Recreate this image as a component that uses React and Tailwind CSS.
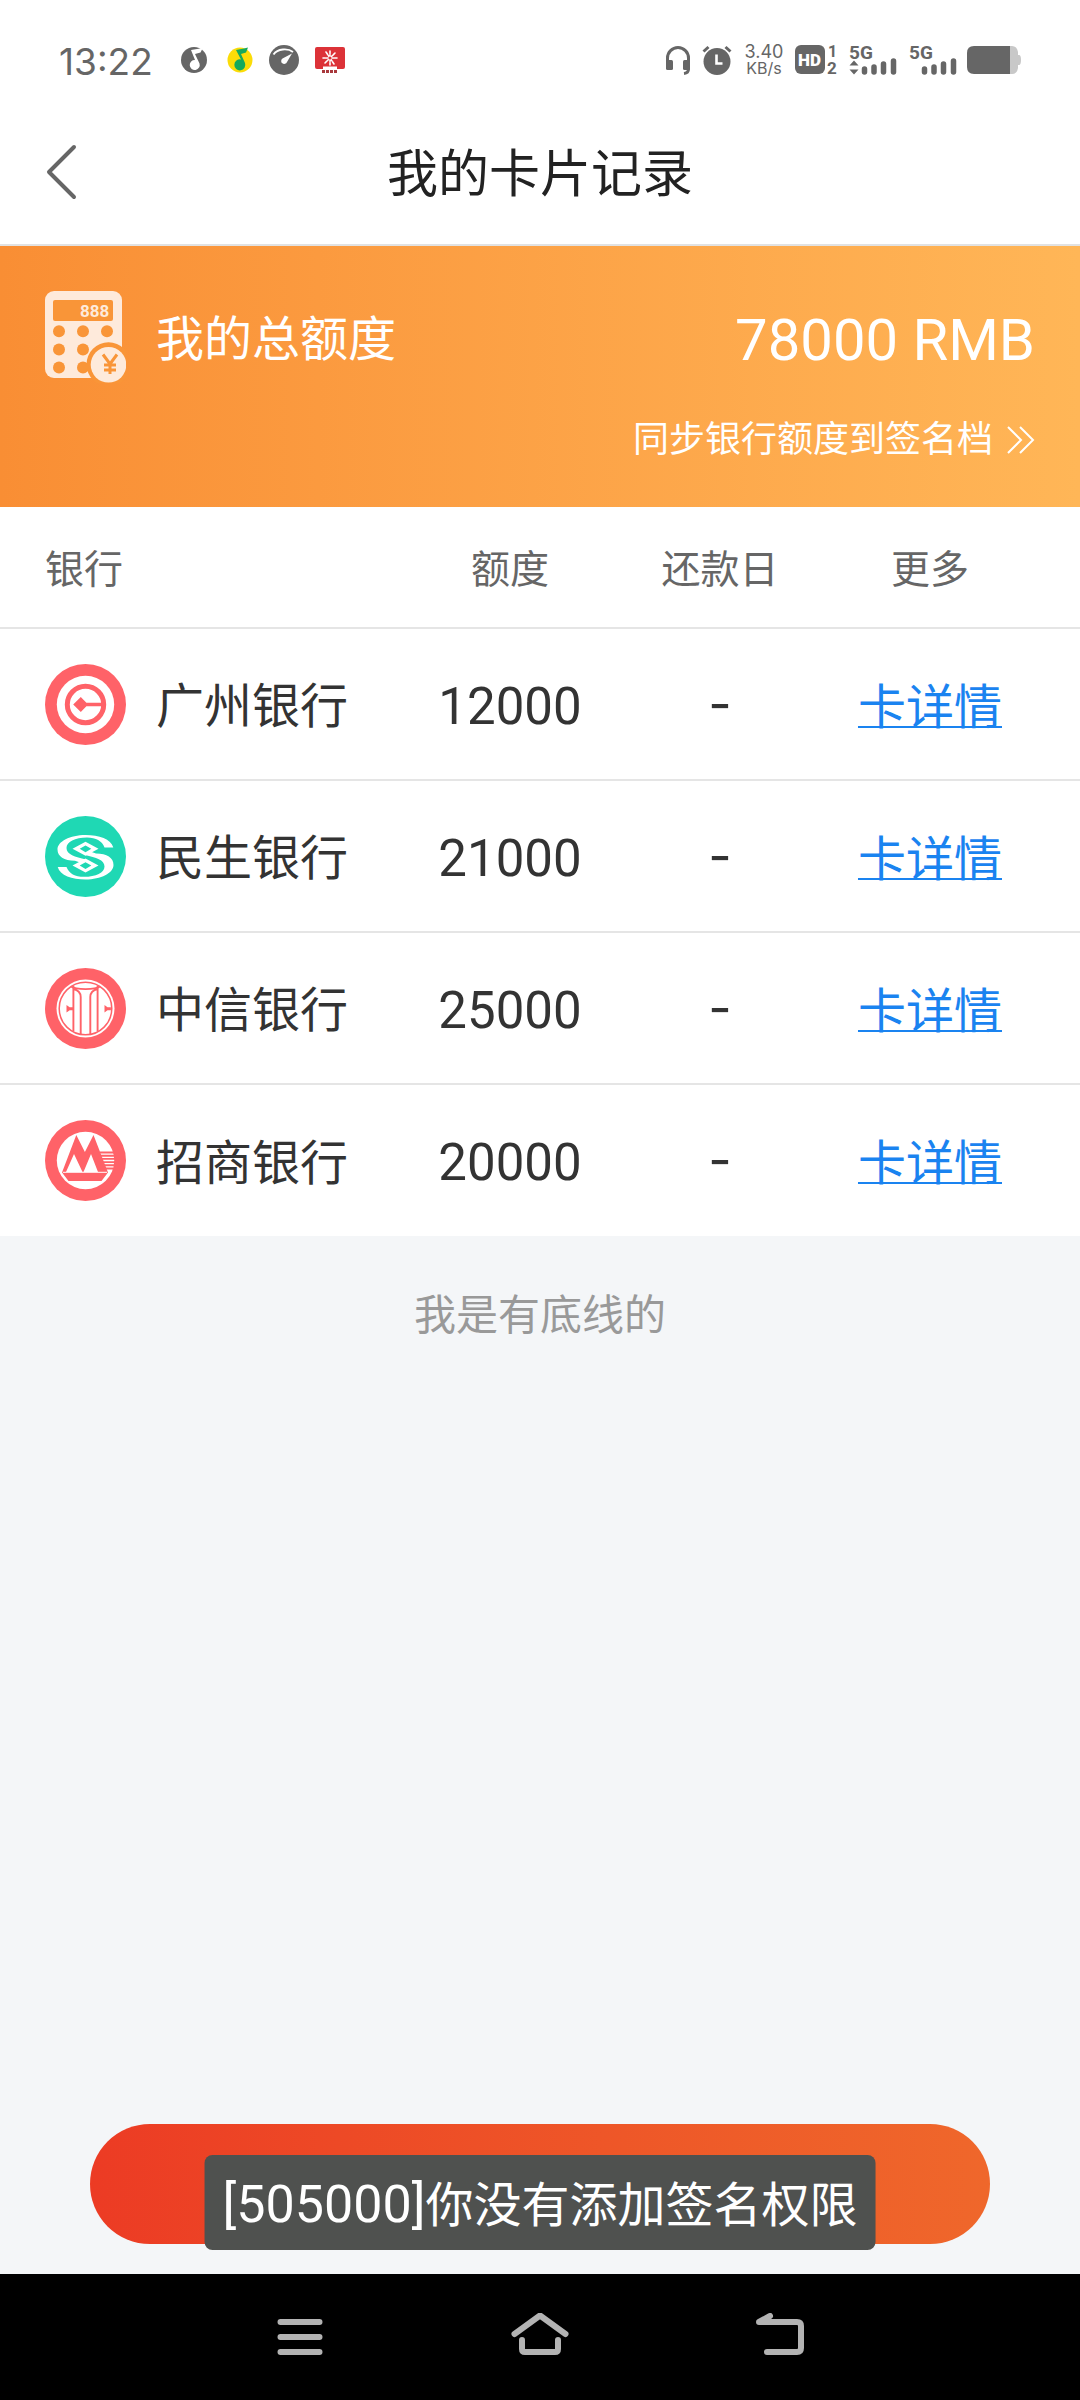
const cards = [
  { id: 1, bank: "广州银行", limit: 12000, repayDay: "-", Logo: GuangzhouLogo },
  { id: 2, bank: "民生银行", limit: 21000, repayDay: "-", Logo: MinshengLogo },
  { id: 3, bank: "中信银行", limit: 25000, repayDay: "-", Logo: CiticLogo },
  { id: 4, bank: "招商银行", limit: 20000, repayDay: "-", Logo: MerchantsLogo },
];

function GuangzhouLogo() {
  return (
    <svg viewBox="0 0 81 81" className="size-[81px] shrink-0" aria-hidden="true">
      <circle cx="40.5" cy="40.5" r="40.5" fill="#ff6268" />
      <circle cx="40.5" cy="40.5" r="28.7" fill="#fff" />
      <circle cx="40.5" cy="40.5" r="18.2" fill="#fff" stroke="#ff6268" strokeWidth="5" />
      <path d="M28.2 40.5l7.6-7.6 5.6 5.8H57v3.6H41.4l-5.6 5.8z" fill="#ff6268" />
    </svg>
  );
}

function MinshengLogo() {
  const half =
    "M68.3 31.5C66 23 54 19 40.5 19C25 19 12.5 25.5 12.5 33.5C12.5 40.5 19 44.6 30 44.8L35 46.6L41 43.4C30 41 21.5 38.5 21.5 32C21.5 26 30 21.6 42 21.6C51 21.6 57 25 59.5 31.5Z";
  return (
    <svg viewBox="0 0 81 81" className="size-[81px] shrink-0" aria-hidden="true">
      <circle cx="40.5" cy="40.5" r="40.5" fill="#1fd8b4" />
      <path d={half} fill="#fff" />
      <path d={half} fill="#fff" transform="rotate(180 40.5 41.2)" />
      <path
        fillRule="evenodd"
        fill="#fff"
        d="M40.5 25.8l13 7-13 7-13-7zM40.5 29.4l-5.8 3.4 5.8 3.4 5.8-3.4zM40.5 42.6l13 7-13 7-13-7zM40.5 46.2l-5.8 3.4 5.8 3.4 5.8-3.4z"
      />
    </svg>
  );
}

function CiticLogo() {
  return (
    <svg viewBox="0 0 81 81" className="size-[81px] shrink-0" aria-hidden="true">
      <circle cx="40.5" cy="40.5" r="40.5" fill="#ff6268" />
      <circle cx="40.5" cy="40.5" r="29" fill="#fff" />
      <circle cx="40.5" cy="40.5" r="26.3" fill="none" stroke="#ff6268" strokeWidth="1.5" />
      <g fill="none" stroke="#ff6268" strokeWidth="1.9">
        <path d="M28.4 18v45M28.4 21c4 1 7.3 3.2 7.3 8v37M52.6 18v45M52.6 21c-4 1-7.3 3.2-7.3 8v37" />
        <path d="M26 18.5c5 3.5 24 3.5 29 0" />
      </g>
      <path d="M21.5 37l3.2 2.200h3.4v3h-3.4l-3.2 2.3zM59.5 37l3 2.200h3.4v3h-3.4l-3 2.3z" fill="#ff6268" />
    </svg>
  );
}

function MerchantsLogo() {
  return (
    <svg viewBox="0 0 81 81" className="size-[81px] shrink-0" aria-hidden="true">
      <circle cx="40.5" cy="40.5" r="40.5" fill="#ff6268" />
      <circle cx="40.5" cy="40.5" r="28.7" fill="#fff" />
      <path d="M31.3 15l8.6 17 8.6-17 14.5 37.5-6.5 8.5H23.5l-6.5-8.5z" fill="#ff6268" />
      <path d="M29 34l8.5 18H21zM46 34l7 18H38.5z" fill="#fff" />
      <path d="M18 52.3h44" stroke="#fff" strokeWidth="1" />
      <path
        d="M55 32.5h14M56 35.7h14M57 38.9h13M58 42.1h12M59 45.3h10M60 48.5h8"
        stroke="#ff6268"
        strokeWidth="1.9"
      />
    </svg>
  );
}

function CalculatorIcon() {
  return (
    <svg viewBox="0 0 81 92" className="h-[92px] w-[81px] shrink-0" aria-hidden="true">
      <rect width="77" height="87" rx="9" fill="#feeadb" />
      <rect x="8" y="9" width="60" height="21" rx="2" fill="#f99538" />
      <text x="35" y="26" fontSize="17" fontWeight="700" fontFamily="Roboto, sans-serif" fill="#feeadb">
        888
      </text>
      <g fill="#f99538">
        <circle cx="14" cy="40.3" r="6" />
        <circle cx="38" cy="40.3" r="6" />
        <circle cx="62" cy="40.3" r="6" />
        <circle cx="14" cy="58.6" r="6" />
        <circle cx="38" cy="58.6" r="6" />
        <circle cx="14" cy="76.4" r="6" />
        <circle cx="38" cy="76.4" r="6" />
        <circle cx="63.5" cy="73.3" r="22" />
      </g>
      <circle cx="63.5" cy="73.8" r="17.8" fill="#feeadb" />
      <path d="M58 63.5l7 9.5 7-9.5M65 73v10M59 74h12M59 79h12" fill="none" stroke="#f99538" strokeWidth="3" />
    </svg>
  );
}

function SignalIcon(props) {
  return (
    <svg viewBox="0 0 48 32" className="h-8 w-12 overflow-visible" aria-hidden="true">
      <text x="0" y="15" fontSize="19" fontWeight="700" fontFamily="Roboto, sans-serif" fill="#666">
        5G
      </text>
      {props.transfer && <path d="M5 16.5l4.5 5h-9zM5 30.5l4.5-5h-9z" fill="#666" />}
      <path
        d="M15.5 25v3M25 23v5M34.5 20v8M44.5 17v11"
        stroke="#666"
        strokeWidth="5.5"
        strokeLinecap="round"
      />
    </svg>
  );
}

function StatusBar() {
  return (
    <div className="flex h-[100px] items-center justify-between bg-white px-[59px] pt-5 text-[#666]">
      <div className="flex items-center">
        <span className="pt-[3px] font-[Inter,sans-serif] text-[37px] leading-10">13:22</span>
        <svg viewBox="0 0 26 26" className="ml-[28px] size-[26px]" aria-hidden="true">
          <circle cx="13" cy="13" r="13" fill="#666" />
          <path d="M10 3l9-1.5 3-1-2.5 5-5.5 1.5 4.5 9.5a5 5 0 1 1-4.5-3.5z" fill="#fff" />
        </svg>
        <svg viewBox="0 0 26 26" className="ml-5 size-[26px]" aria-hidden="true">
          <circle cx="13" cy="13" r="12.5" fill="#fbdc08" />
          <path d="M9 3l8-1.5 4-1-2 5-5 1.5 4 9a5.5 5.5 0 1 1-4-3.5z" fill="#14a95c" />
        </svg>
        <svg viewBox="0 0 30 30" className="ml-4 size-[30px]" aria-hidden="true">
          <circle cx="15" cy="15" r="15" fill="#666" />
          <path d="M4.5 9.5C8.5 3.5 19 3 24 7" fill="none" stroke="#fff" strokeWidth="1.8" />
          <path d="M23 8.5l-5 8.5a3 3 0 1 1-4.5-3.5z" fill="#fff" />
        </svg>
        <svg viewBox="0 0 30 27" className="ml-4 h-[27px] w-[30px]" aria-hidden="true">
          <rect width="30" height="22" rx="2" fill="#dc3238" />
          {/* flower: eight thin petals round the middle */}
          <path
            d="M15 11V4M15 11l5-5M15 11h7M15 11l4 6M15 11v7M15 11l-5 5M15 11H8M15 11l-4-6"
            stroke="#fff"
            strokeWidth="1.6"
            strokeDasharray="3.5 1"
            strokeLinecap="round"
          />
          <circle cx="15" cy="11" r="1.6" fill="#dc3238" />
          <path d="M8 19.5h14v2.5H8z" fill="#fff" />
          <path d="M7 24.5h15" stroke="#a8383c" strokeWidth="3" strokeDasharray="3 1" />
        </svg>
      </div>

      <div className="flex items-center">
        <svg viewBox="0 0 26 30" className="h-[30px] w-[26px]" aria-hidden="true">
          <path d="M2.5 18v-5a10.5 10.5 0 0 1 21 0v11q0 4-4.5 4.5" fill="none" stroke="#666" strokeWidth="3" />
          <rect x="1" y="15" width="7" height="10" rx="1.5" fill="#666" />
          <rect x="18" y="15" width="7" height="10" rx="1.5" fill="#666" />
        </svg>
        <svg viewBox="0 0 30 30" className="ml-[11px] size-[30px]" aria-hidden="true">
          <circle cx="15" cy="16.5" r="13.5" fill="#666" />
          <path d="M1.5 6.5l5-4.5M28.5 6.5l-5-4.5" stroke="#666" strokeWidth="3" />
          <path d="M14.5 9.5v9h6" fill="none" stroke="#fff" strokeWidth="2.6" />
        </svg>
        <div className="ml-3 w-10 text-center font-[Inter,sans-serif] text-[18px] leading-4">
          <p>3.40</p>
          <p className="text-[16px]">KB/s</p>
        </div>
        <svg viewBox="0 0 44 32" className="ml-[11px] h-8 w-11 overflow-visible" aria-hidden="true">
          <rect y="1" width="30" height="29" rx="6" fill="#666" />
          <text x="3" y="22" fontSize="17" fontWeight="900" fontFamily="Roboto, sans-serif" fill="#fff">
            HD
          </text>
          <text x="33" y="13" fontSize="16" fontWeight="700" fontFamily="Roboto, sans-serif" fill="#666">
            1
          </text>
          <text x="32" y="30" fontSize="17" fontWeight="700" fontFamily="Roboto, sans-serif" fill="#666">
            2
          </text>
        </svg>
        <div className="ml-[10px] flex gap-3">
          <SignalIcon transfer />
          <SignalIcon />
        </div>
        <svg viewBox="0 0 54 28" className="ml-[10px] h-7 w-[54px]" aria-hidden="true">
          <path d="M42 0h3q5 0 6 6v3h1q2 0 2 5t-2 5h-1v3q-1 6-6 6h-3z" fill="#c8c8c8" />
          <path d="M7 0h36v28H7q-7 0-7-7V7q0-7 7-7z" fill="#666" />
        </svg>
      </div>
    </div>
  );
}

function SystemNav() {
  return (
    <nav className="bg-black">
      <div className="mx-auto grid h-[126px] w-2/3 grid-cols-3 place-items-center">
        <button type="button" aria-label="菜单">
          <svg viewBox="0 0 60 48" className="h-12 w-[60px]" fill="none" stroke="#b3b3b3" strokeWidth="6" strokeLinecap="round">
            <path d="M10.5 9h39M10.5 24h39M10.5 39h39" />
          </svg>
        </button>
        <button type="button" aria-label="主页">
          <svg viewBox="0 0 60 48" className="h-12 w-[60px]" fill="none" stroke="#b3b3b3" strokeWidth="6" strokeLinecap="round" strokeLinejoin="round">
            <path d="M4.5 21L30 2.5l25.5 18.5M12 27v9q0 3 3 3h30q3 0 3-3v-9" />
          </svg>
        </button>
        <button type="button" aria-label="返回">
          <svg viewBox="0 0 60 48" className="h-12 w-[60px]" fill="none" stroke="#b3b3b3" strokeWidth="6" strokeLinecap="round" strokeLinejoin="round">
            <path d="M17 39h30q4 0 4-4V13q0-4-4-4H9l11-6" />
          </svg>
        </button>
      </div>
    </nav>
  );
}

export default function App() {
  const total = cards.reduce((sum, card) => sum + card.limit, 0);

  return (
    <div className="flex min-h-screen flex-col bg-[#f4f6f8] font-[Roboto,'Noto_Sans_CJK_SC',sans-serif] text-[#333]">
      <StatusBar />

      {/* Title bar */}
      <header className="grid h-[146px] grid-cols-[1fr_auto_1fr] items-center border-b-2 border-[#e2e2e2] bg-white px-[45px]">
        <button type="button" aria-label="返回" className="justify-self-start">
          <svg viewBox="0 0 34 56" className="h-14 w-[34px]" fill="none" stroke="#666" strokeWidth="4" strokeLinecap="round" strokeLinejoin="round">
            <path d="M29 3L4 28l25 25" />
          </svg>
        </button>
        <h1 className="pt-1.5 text-[51px] leading-[60px] text-[#222]">我的卡片记录</h1>
      </header>

      {/* Total limit */}
      <section className="bg-linear-to-r from-[#f98e34] to-[#ffb657] px-[45px] pt-[45px] pb-[42px] text-white">
        <div className="flex items-center">
          <CalculatorIcon />
          <span className="ml-[30px] pt-1.5 text-[48px] leading-[60px]">我的总额度</span>
          <span className="ml-auto pt-1.5 text-[58px] leading-[60px]">{total} RMB</span>
        </div>
        <a href="#sync" className="mt-8 flex items-center justify-end gap-3.5 text-[36px] leading-[50px]">
          同步银行额度到签名档
          <svg viewBox="0 0 28 28" className="size-7" fill="none" stroke="#fff" strokeWidth="2" aria-hidden="true">
            <path d="M1 1l13 13L1 27M13 1l13 13-13 13" />
          </svg>
        </a>
      </section>

      {/* Card list */}
      <table className="w-full table-fixed bg-white text-center">
        <thead>
          <tr className="h-[121px] border-b-2 border-[#e5e5e5] text-[39px] text-[#666]">
            <th className="pt-1.5 pl-[45px] text-left font-normal">银行</th>
            <th className="w-[210px] pt-1.5 font-normal">额度</th>
            <th className="w-[210px] pt-1.5 font-normal">还款日</th>
            <th className="w-[255px] pt-1.5 pr-[45px] font-normal">更多</th>
          </tr>
        </thead>
        <tbody>
          {cards.map((card) => (
            <tr key={card.id} className="h-[152px] border-b-2 border-[#e5e5e5] text-[51px] last:border-b-0">
              <td className="pl-[45px]">
                <div className="flex items-center gap-[30px] text-[48px] leading-[60px]">
                  <card.Logo />
                  <span className="pt-1.5">{card.bank}</span>
                </div>
              </td>
              <td className="pt-1.5">{card.limit}</td>
              <td className="font-[Inter,sans-serif]">{card.repayDay}</td>
              <td className="pt-1.5 pr-[45px]">
                <a
                  href={"#card-" + card.id}
                  className="text-[48px] text-[#1a83f0] underline decoration-2 underline-offset-2 [text-decoration-skip-ink:none]"
                >
                  卡详情
                </a>
              </td>
            </tr>
          ))}
        </tbody>
      </table>

      <p className="mt-[50px] text-center text-[42px] leading-[60px] text-[#999]">我是有底线的</p>

      {/* Submit button with the toast over it */}
      <div className="relative mt-auto px-[90px] pb-[30px]">
        <button
          type="button"
          aria-label="添加签名"
          className="block h-[120px] w-full rounded-full bg-linear-to-r from-[#ec3b24] to-[#ef672b]"
        ></button>
        <div
          role="status"
          className="absolute bottom-6 left-1/2 flex h-[95px] -translate-x-1/2 items-center rounded-lg bg-[#4f514f] px-[18px] pt-1 text-[48px] whitespace-nowrap text-white"
        >
          <p>
            <span className="text-[52px]">[505000]</span>你没有添加签名权限
          </p>
        </div>
      </div>

      <SystemNav />
    </div>
  );
}
